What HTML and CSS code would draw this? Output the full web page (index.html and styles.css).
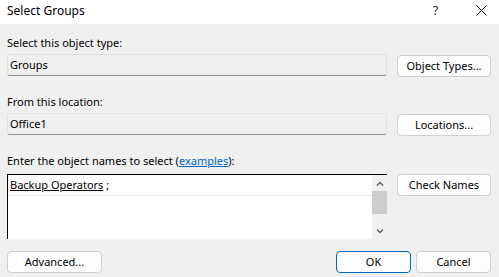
FILE: index.html
```html
<!DOCTYPE html>
<html>
<head>
<meta charset="utf-8">
<link rel="stylesheet" href="styles.css">
</head>
<body>
<div class="dialog">
  <div class="titlebar">
    <span class="title">Select Groups</span>
    <span class="help">?</span>
    <span class="close"><svg width="11" height="11" viewBox="0 0 11 11"><path d="M0.5 0.5 L10.5 10.5 M10.5 0.5 L0.5 10.5" stroke="#1a1a1a" stroke-width="1" fill="none"/></svg></span>
  </div>
  <div class="content">
    <div class="label l1">Select this object type:</div>
    <div class="row">
      <div class="field">Groups</div>
      <button class="btn">Object Types...</button>
    </div>
    <div class="label l2">From this location:</div>
    <div class="row">
      <div class="field">Office1</div>
      <button class="btn">Locations...</button>
    </div>
    <div class="label l3">Enter the object names to select (<a class="link">examples</a>):</div>
    <div class="row names-row">
      <div class="names">
        <div class="names-text">
          <div class="line1"><span class="resolved">Backup Operators</span> ;</div>
        </div>
        <div class="scrollbar">
          <svg class="arrow" width="8" height="6" viewBox="0 0 8 6"><path d="M1 4.5 L4 1.5 L7 4.5" stroke="#606060" stroke-width="1.4" fill="none"/></svg>
          <div class="thumb"></div>
          <div class="track"></div>
          <svg class="arrow" width="8" height="6" viewBox="0 0 8 6"><path d="M1 1.5 L4 4.5 L7 1.5" stroke="#606060" stroke-width="1.4" fill="none"/></svg>
        </div>
      </div>
      <button class="btn">Check Names</button>
    </div>
    <div class="footer">
      <button class="btn btn-adv">Advanced...</button>
      <div class="spacer"></div>
      <button class="btn btn-ok">OK</button>
      <button class="btn btn-cancel">Cancel</button>
    </div>
  </div>
</div>
</body>
</html>
```
FILE: styles.css
```css
html, body {
  margin: 0;
  padding: 0;
}
body {
  width: 499px;
  height: 277px;
  background: #f0f0f0;
  font-family: "Noto Sans", "Open Sans", sans-serif;
  font-size: 11px;
  color: #000;
  overflow: hidden;
}
.dialog {
  width: 499px;
  height: 277px;
  display: flex;
  flex-direction: column;
}
.titlebar {
  height: 24px;
  background: #fff;
  display: flex;
  align-items: center;
  padding-left: 7px;
  box-sizing: border-box;
}
.title {
  font-size: 12px;
  flex: 1;
  line-height: 16px;
  margin-top: -3px;
}
.help {
  font-size: 12px;
  width: 12px;
  margin-right: 31px;
  margin-top: -3px;
  color: #1a1a1a;
}
.close {
  width: 11px;
  height: 11px;
  margin-right: 12px;
  margin-top: -4px;
  display: flex;
}
.content {
  padding: 0 8px 0 7px;
  display: flex;
  flex-direction: column;
}
.label {
  line-height: 16px;
  height: 16px;
  margin-bottom: 3px;
}
.l1 { margin-top: 11px; }
.l2 { margin-top: 17px; }
.l3 { margin-top: 17px; margin-bottom: 5px; }
.link {
  color: #0067c0;
  text-decoration: underline;
}
.row {
  display: flex;
  align-items: flex-start;
  gap: 10px;
}
.field {
  width: 380px;
  height: 22px;
  box-sizing: border-box;
  background: #efefef;
  border: 1px solid #e2e2e2;
  border-bottom: 1px solid #8f8f8f;
  border-radius: 3px;
  padding-left: 2px;
  line-height: 19px;
}
.btn {
  width: 94px;
  height: 22px;
  box-sizing: border-box;
  background: #fdfdfd;
  border: 1px solid #d0d0d0;
  border-radius: 4px;
  font-family: inherit;
  font-size: 11px;
  color: #000;
  padding: 0;
  line-height: 18px;
  margin-top: 1px;
}
.names {
  width: 380px;
  height: 65px;
  box-sizing: border-box;
  border-top: 1px solid #000;
  border-left: 1px solid #000;
  display: flex;
  background: #fff;
}
.names-text {
  flex: 1;
  padding-left: 2px;
}
.line1 {
  line-height: 20px;
  height: 20px;
  border-bottom: 1px solid #e8e8e8;
  margin-left: -2px;
  padding-left: 2px;
}
.resolved {
  text-decoration: underline;
}
.scrollbar {
  width: 15px;
  background: #f0f0f0;
  display: flex;
  flex-direction: column;
  align-items: center;
}
.arrow {
  margin: 6px 0 4px;
  flex: none;
}
.thumb {
  width: 15px;
  height: 23px;
  background: #cdcdcd;
}
.track {
  flex: 1;
}
.scrollbar .arrow:last-child {
  margin: 4px 0 5px;
}
.names-row .btn {
  margin-top: 0;
}
.footer {
  display: flex;
  margin-top: 12px;
  gap: 5px;
}
.footer .btn {
  margin-top: 0;
  height: 22px;
}
.footer .btn-adv {
  width: 95px;
}
.footer .btn-ok {
  width: 75px;
  border: 1px solid #0067c0;
}
.footer .btn-cancel {
  width: 75px;
}
.spacer {
  flex: 1;
}
```
